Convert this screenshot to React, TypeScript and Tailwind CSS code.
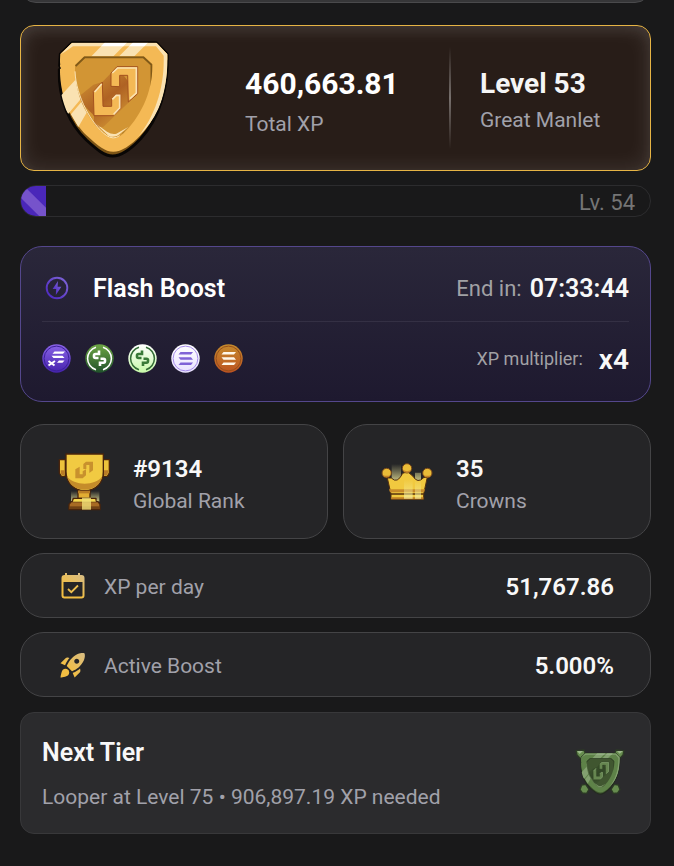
import { useId } from 'react'
import type { ReactNode } from 'react'

const GLYPH_LEFT = 'M145 185L172 157L174 230H200V207L213 194H227V236L205 258H147Z'
const GLYPH_RIGHT = 'M198 170V130L216 111H278V192L250 217L248 137H224V171Z'

const GOLD = {
  edge: '#080605', rim: '#7c5416', face: '#f4b955', shine: '#fae2b2', glint: '#ffffff',
  inner: '#d29534', lip: '#805918', shadow: '#a3511e', glyph: '#f4b955',
}

const GREEN = {
  edge: '#23291f', rim: '#3e562e', face: '#5e8248', shine: '#83a170', glint: '#9bb38b',
  inner: '#405630', lip: '#293a20', shadow: '#2d4123', glyph: '#668650',
}

const TOKENS = [
  { name: 'xSOL', from: '#8b64e8', to: '#4522ad', ring: '#3c2199', mark: '#ffffff', kind: 'bars-x' },
  { name: 'hyUSD', from: '#6da644', to: '#20512b', ring: '#ffffff', mark: '#ffffff', kind: 'dollar' },
  { name: 'sHYUSD', from: '#ffffff', to: '#c7f9a9', ring: '#326c35', mark: '#397a38', kind: 'dollar' },
  { name: 'SOL', from: '#ffffff', to: '#e9e1ff', ring: '#a58be9', mark: '#8062d7', kind: 'bars' },
  { name: 'hySOL', from: '#c58b2c', to: '#bd5221', ring: '#97501c', mark: '#fff7ea', kind: 'bars' },
]

function ShieldArt({ colors }: { colors: typeof GOLD }) {
  const id = useId()
  const outer = 'M46 73L82 39H334L367 74C370 175 342 268 286 328C254 362 227 379 203 379C178 379 157 361 124 331C76 285 40 213 43 120L48 116L44 108Z'
  const inner = 'M90 107L118 80H296L322 104C324 191 282 269 233 313Q207 337 177 311C122 265 88 190 90 107Z'
  return (
    <>
      <defs>
        <clipPath id={`${id}o`}><path d={outer} /></clipPath>
        <clipPath id={`${id}i`}><path d={inner} /></clipPath>
        <linearGradient id={`${id}s`} gradientUnits="userSpaceOnUse" x1="150" y1="130" x2="250" y2="260">
          <stop offset="0" stopColor={colors.shadow} stopOpacity="0.15" />
          <stop offset="0.5" stopColor={colors.shadow} stopOpacity="0.75" />
          <stop offset="1" stopColor={colors.shadow} stopOpacity="0.05" />
        </linearGradient>
      </defs>
      <path d={outer} fill={colors.rim} stroke={colors.edge} strokeWidth="9" strokeLinejoin="round" />
      <g clipPath={`url(#${id}o)`}>
        <path d={outer} fill={colors.face} transform="translate(2 -13)" />
        <path d="M40 30H370V90L46 110Z" fill={colors.face} />
        <path d="M333 50L356 78C359 172 331 258 279 322C340 266 375 180 370 66L334 38H80L48 74L60 66L84 50Z" fill={colors.shine} />
        <path d="M180 38H247L165 120H100ZM264 38H310L220 128H175ZM44 202L110 130V205L70 252L44 220ZM78 254L130 192V240L100 292Z" fill={colors.shine} />
        <path d="M180 38H247L235 50H168ZM264 38H310L298 50H252Z" fill={colors.glint} />
      </g>
      <path d={inner} fill={colors.inner} />
      <g clipPath={`url(#${id}i)`}>
        <path d="M90 107L118 80H296L322 104V190" fill="none" stroke={colors.lip} strokeWidth="11" />
        <path d="M322 190C314 240 280 282 233 313" fill="none" stroke={colors.lip} strokeWidth="7" opacity="0.4" />
        <path d="M150 280L190 318Q208 328 228 310L250 292L214 312Q202 316 186 306Z" fill={colors.shine} />
        <path d="M198 130L216 111L278 192L175 292H147V258L96 205L145 165L172 157Z" fill={`url(#${id}s)`} />
      </g>
      <path d="M90 125C93 200 140 285 184 317Q205 332 224 318" fill="none" stroke={colors.shine} strokeWidth="3" />
      <path d={GLYPH_LEFT} fill={colors.glyph} stroke={colors.shadow} strokeWidth="3" />
      <path d={GLYPH_RIGHT} fill={colors.glyph} stroke={colors.shadow} strokeWidth="3" />
      <path d="M149 187L170 163M202 209L214 197H224V235L206 254M202 130L218 115H274V190L255 207" fill="none" stroke={colors.shine} strokeWidth="5" />
    </>
  )
}

function GoldShield() {
  return (
    <svg viewBox="36 25 342 360" className="h-[120px] w-[114px] shrink-0">
      <ShieldArt colors={GOLD} />
    </svg>
  )
}

function LooperShield() {
  return (
    <svg viewBox="0 0 150 144" className="h-12 w-[50px] shrink-0">
      <g fill="#668c4e" stroke="#2c3a25" strokeWidth="4" strokeLinejoin="round">
        <path d="M3 5L27 3L35 24L22 35L6 18Z" />
        <path d="M147 5L123 3L115 24L128 35L144 18Z" />
        <path d="M20 108L32 106L42 121L35 133L22 132L15 122Z" />
        <path d="M130 108L118 106L108 121L115 133L128 132L135 122Z" />
      </g>
      <path d="M6 6L24 6L14 15ZM144 6L126 6L134 14Z" fill="#9cb88a" />
      <g transform="translate(2 -1) scale(0.36)">
        <ShieldArt colors={GREEN} />
      </g>
    </svg>
  )
}

function TrophyIcon() {
  return (
    <svg viewBox="24 24 156 174" className="h-[58px] w-[52px] shrink-0">
      <defs>
        <linearGradient id="beam" x1="0" y1="0" x2="0" y2="1">
          <stop offset="0" stopColor="#f5ef9f" stopOpacity="0" />
          <stop offset="1" stopColor="#f5ef9f" stopOpacity="0.8" />
        </linearGradient>
      </defs>
      <path d="M63 138H148V170H63Z" fill="url(#beam)" />
      <g stroke="#4a240b" strokeWidth="4" strokeLinejoin="round">
        <path d="M28 44H46V94H34L28 84ZM160 44H178V84L172 94H160Z" fill="#edc23b" />
        <path d="M84 134H120V160H84Z" fill="#e2ad32" />
        <path d="M70 160H138V178H64Z" fill="#edc23b" />
        <path d="M57 178L64 170H144L150 178V194H57Z" fill="#a86b24" />
        <path d="M48 27H160V80C160 112 138 137 104 137C72 137 48 112 48 80Z" fill="#f1ca42" />
      </g>
      <path d="M32 76H44V90H35L32 84ZM162 76H174V84L171 90H162Z" fill="#b97b26" />
      <path d="M51 94C70 123 137 124 157 94C151 119 133 134 104 134C75 134 57 119 51 94Z" fill="#c58c2a" />
      <path d="M84 137H120V145H84Z" fill="#b87c25" />
      <path d="M74 163H134L138 170H68Z" fill="#f5d851" />
      <path d="M59 184H149V192H59Z" fill="#704215" />
      <path d="M96 158H123V194H96Z" fill="#f0df78" opacity="0.8" />
      <path d="M76 73L89 65V88H98V79L108 73V91L98 100H76ZM100 64V57L108 50H129V76L118 84V60H109V72H100Z" fill="#c8912d" />
    </svg>
  )
}

function CrownIcon() {
  return (
    <svg viewBox="18 28 156 117" className="h-[39px] w-[52px] shrink-0">
      <defs>
        <linearGradient id="ray" x1="0" y1="0" x2="0" y2="1">
          <stop offset="0" stopColor="#f5ef9f" stopOpacity="0" />
          <stop offset="1" stopColor="#f5ef9f" stopOpacity="0.75" />
        </linearGradient>
      </defs>
      <path d="M50 34H78V84H50ZM120 60H138V84H120Z" fill="url(#ray)" />
      <path d="M37 76L49 76Q67 95 83 62L92 59H100L114 71Q128 94 146 75L157 73L146 124V140H48V124Z" fill="#f1c93f" stroke="#55300e" strokeWidth="3" strokeLinejoin="round" />
      <path d="M42 110H150L147 119H45Z" fill="#c88b2a" />
      <path d="M46 124H146" stroke="#55300e" strokeWidth="4" />
      <path d="M49 134H145V140H49Z" fill="#bd7e25" />
      <path d="M87 80H113V138H87ZM120 84H138V138H120Z" fill="url(#ray)" />
      <g fill="#eabc38" stroke="#764619" strokeWidth="3">
        <circle cx="35" cy="61" r="14" />
        <circle cx="96" cy="47" r="14" />
        <circle cx="157" cy="61" r="14" />
      </g>
      <path d="M23 66Q35 73 47 66Q43 74 35 74Q27 74 23 66ZM84 52Q96 59 108 52Q104 60 96 60Q88 60 84 52ZM145 66Q157 73 169 66Q165 74 157 74Q149 74 145 66Z" fill="#c38327" />
    </svg>
  )
}

function BoltIcon() {
  return (
    <svg viewBox="0 0 24 24" className="size-6 shrink-0">
      <defs>
        <linearGradient id="bolt" x1="0" y1="1" x2="1" y2="0">
          <stop offset="0" stopColor="#4a24c0" />
          <stop offset="1" stopColor="#8067d7" />
        </linearGradient>
      </defs>
      <circle cx="12" cy="12" r="10.3" fill="none" stroke="url(#bolt)" strokeWidth="1.9" />
      <path d="M13 5L7.6 13H11.2L10.8 19L16.4 10.8H12.6Z" fill="url(#bolt)" />
    </svg>
  )
}

function CalendarIcon() {
  return (
    <svg viewBox="0 0 24 26" className="h-[26px] w-[30px] shrink-0">
      <defs>
        <linearGradient id="cal" x1="0.2" y1="1" x2="0.8" y2="0">
          <stop offset="0.3" stopColor="#f2be42" />
          <stop offset="1" stopColor="#d8bd84" />
        </linearGradient>
      </defs>
      <path fillRule="evenodd" d="M4 0H6V2H17V0H19V2H20.5Q23.5 2 23.5 5V22.5Q23.5 25.5 20.5 25.5H3.5Q.5 25.5 .5 22.500V5Q.5 2 3.500 2H4ZM2.500 9V22.500Q2.500 23.500 3.500 23.500H20.500Q21.500 23.500 21.500 22.500V9Z" fill="url(#cal)" />
      <path d="M7 16L10.300 19.200L17 12.500" fill="none" stroke="#eebf4e" strokeWidth="1.8" />
    </svg>
  )
}

function RocketIcon() {
  return (
    <svg viewBox="0 0 24 24" className="size-[30px] shrink-0">
      <defs>
        <linearGradient id="rocket" x1="0" y1="1" x2="1" y2="0">
          <stop offset="0.3" stopColor="#f2be42" />
          <stop offset="1" stopColor="#d8bd84" />
        </linearGradient>
      </defs>
      <path fill="url(#rocket)" d="M9.19 6.35c-2.04 2.29-3.44 5.58-3.57 5.89L2 10.69l4.05-4.05c.47-.47 1.15-.68 1.81-.55l1.33.26zM11.17 17s3.74-1.55 5.89-3.7c5.4-5.4 4.5-9.62 4.21-10.57-.95-.3-5.17-1.19-10.57 4.21C8.55 9.09 7 12.83 7 12.83L11.17 17zm6.48-2.19c-2.29 2.04-5.58 3.44-5.89 3.57L13.31 22l4.05-4.05c.47-.47.68-1.15.55-1.81l-.26-1.33zM9 18c0 .83-.34 1.58-.88 2.12C6.94 21.3 2 22 2 22s.7-4.94 1.88-6.12A2.996 2.996 0 0 1 9 18zm4-9c0-1.1.9-2 2-2s2 .9 2 2-.9 2-2 2-2-.9-2-2z" />
    </svg>
  )
}

function TokenIcon({ token }: { token: (typeof TOKENS)[number] }) {
  const id = useId()
  return (
    <svg viewBox="0 0 29 29" className="size-[29px]" role="img" aria-label={token.name}>
      <defs>
        <linearGradient id={id} x1="0" y1="0" x2="0" y2="1">
          <stop offset="0" stopColor={token.from} />
          <stop offset="1" stopColor={token.to} />
        </linearGradient>
      </defs>
      <circle cx="14.5" cy="14.5" r="14.2" fill={`url(#${id})`} />
      {token.kind === 'dollar' ? (
        <>
          <path d="M11 3.2A11.8 11.8 0 0 0 11 25.8M18 3.2A11.8 11.8 0 0 1 18 25.8" fill="none" stroke={token.ring} strokeWidth="1.5" />
          <path d="M14 6.5V10H10.5Q9 10 9 11.5V12.5Q9 14 10.5 14H13.5M15 22V18.7H18.5Q20 18.7 20 17V16Q20 14.8 18.5 14.8H15.5" fill="none" stroke={token.mark} strokeWidth="2.6" />
        </>
      ) : (
        <circle cx="14.5" cy="14.5" r="12.4" fill="none" stroke={token.ring} strokeWidth="1" />
      )}
      {token.kind === 'bars' && (
        <path d="M9.5 8H22L20 10.5H7.5ZM7.5 13.2H20L22 15.7H9.5ZM9.5 18.4H22L20 20.9H7.5Z" fill={token.mark} />
      )}
      {token.kind === 'bars-x' && (
        <>
          <path d="M12.5 7.5H23L21 9.7H10.5ZM9.5 11.8H20.5L22.5 14H11.5ZM17 16.5H22.5L20.5 18.7H15Z" fill={token.mark} />
          <path d="M6.5 17L12.5 21.5M13 17L6.5 21.5" stroke={token.mark} strokeWidth="2" />
        </>
      )}
    </svg>
  )
}

function StatCard({ icon, value, label }: { icon: ReactNode; value: string; label: string }) {
  return (
    <div className="flex h-[115px] items-center gap-[23px] rounded-3xl border border-[#444446] bg-[#252527] pl-[37px]">
      {icon}
      <div className="pt-1.5">
        <p className="text-2xl leading-8 font-semibold text-[#f8f8f8]">{value}</p>
        <p className="text-[21px] leading-8 text-[#a1a1aa]">{label}</p>
      </div>
    </div>
  )
}

function InfoRow({ icon, label, value }: { icon: ReactNode; label: string; value: string }) {
  return (
    <div className="flex h-[65px] items-center rounded-3xl border border-[#444446] bg-[#252527] pr-9 pl-[37px]">
      {icon}
      <span className="ml-4 pt-0.5 text-[21px] leading-8 text-[#a1a1aa]">{label}</span>
      <span className="ml-auto pt-0.5 text-2xl leading-8 font-semibold text-[#f8f8f8]">{value}</span>
    </div>
  )
}

export default function App() {
  return (
    <main className="min-h-screen bg-[#19191a] pr-[23px] pb-8 pl-5 font-['Roboto','Liberation_Sans',sans-serif]">
      <div className="flex h-[3px] items-end overflow-hidden">
        <div className="h-10 w-full shrink-0 rounded-2xl border border-[#4a4a4c] bg-[#363638]" />
      </div>

      <section className="mt-[22px] flex h-[146px] items-start rounded-[14px] border border-[#e6b445] bg-[#281d18] pl-9 shadow-[inset_0_0_22px_rgba(255,255,255,0.12),inset_0_5px_14px_rgba(255,255,255,0.06)]">
        <div className="self-center">
          <GoldShield />
        </div>
        <div className="flex-1 pt-10 pl-[74px]">
          <p className="text-3xl leading-9 font-bold text-white">460,663.81</p>
          <p className="mt-2 text-[21px] leading-7 text-[#a1a1aa]">Total XP</p>
        </div>
        <div className="h-[102px] w-0.5 self-center bg-linear-to-b from-transparent via-[#77706d] to-transparent" />
        <div className="w-[199px] pt-10 pl-[29px]">
          <p className="text-[28px] leading-9 font-bold text-[#f5f5f5]">Level 53</p>
          <p className="mt-1 text-[21px] leading-7 text-[#a1a1aa]">Great Manlet</p>
        </div>
      </section>

      <div className="mt-[14px] flex h-8 items-center justify-between overflow-hidden rounded-full border border-[#2c2c2e]">
        <div className="h-full w-[4%] bg-[#4a27b9]">
          <svg viewBox="0 0 25 30" preserveAspectRatio="none" className="size-full">
            <path d="M0 2H5L25 22V30H18L0 12Z" fill="#7653cb" />
          </svg>
        </div>
        <span className="pt-1 pr-[15px] text-[22px] leading-8 text-[#757575]">Lv. 54</span>
      </div>

      <section className="mt-[29px] rounded-[22px] border border-[#54478c] bg-linear-to-b from-[#2a273a] to-[#1e192f] px-[21px]">
        <div className="flex h-[75px] items-center border-b border-[#343044] pt-2 pl-[3px]">
          <BoltIcon />
          <h2 className="ml-6 pt-0.5 text-[25px] leading-8 font-semibold text-white">Flash Boost</h2>
          <span className="ml-auto pt-0.5 text-[22px] leading-8 text-[#a1a1a5]">End in:</span>
          <span className="ml-2 pt-0.5 text-[25px] leading-8 font-semibold text-[#f8f8f8]">07:33:44</span>
        </div>
        <div className="flex h-[79px] items-center pb-1.5">
          <div className="flex gap-[14px]">
            {TOKENS.map((t) => (
              <TokenIcon key={t.name} token={t} />
            ))}
          </div>
          <span className="ml-auto text-lg leading-8 text-[#a1a1a5]">XP multiplier:</span>
          <span className="ml-4 pt-0.5 text-[28px] leading-8 font-semibold text-[#f8f8f8]">x4</span>
        </div>
      </section>

      <div className="mt-[22px] grid grid-cols-2 gap-[15px]">
        <StatCard icon={<TrophyIcon />} value="#9134" label="Global Rank" />
        <StatCard icon={<CrownIcon />} value="35" label="Crowns" />
      </div>

      <div className="mt-[14px] flex flex-col gap-[14px]">
        <InfoRow icon={<CalendarIcon />} label="XP per day" value="51,767.86" />
        <InfoRow icon={<RocketIcon />} label="Active Boost" value="5.000%" />
      </div>

      <section className="mt-[15px] flex h-[122px] items-center justify-between rounded-[14px] border border-[#38383a] bg-[#2b2b2d] pr-[25px] pl-[21px]">
        <div className="pt-1">
          <h2 className="text-[25px] leading-8 font-semibold text-[#f8f8f8]">Next Tier</h2>
          <p className="mt-3 text-[21px] leading-8 text-[#a1a1aa]">Looper at Level 75 • 906,897.19 XP needed</p>
        </div>
        <LooperShield />
      </section>
    </main>
  )
}
